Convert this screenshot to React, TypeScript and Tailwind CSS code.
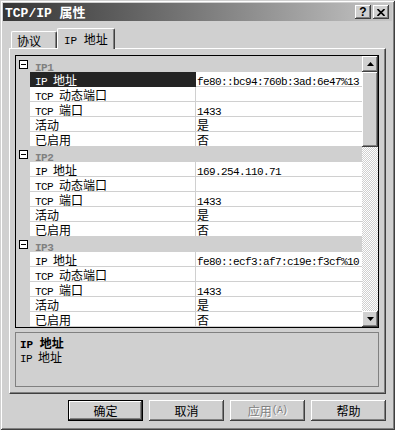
import React from "react";

const CJK_RE = /[\u2E80-\u9FFF\uF900-\uFAFF\uFF00-\uFFEF\u3000-\u303F]/;

function splitRuns(text: string) {
  const out: { s: string; c: boolean }[] = [];
  for (const ch of Array.from(text)) {
    const c = CJK_RE.test(ch);
    const last = out[out.length - 1];
    if (last && last.c === c) last.s += ch;
    else out.push({ s: ch, c });
  }
  return out;
}

function Txt({
  text,
  lat = "font-['Liberation_Mono',monospace] text-[11px] leading-[14px] tracking-[-0.6px]",
  cjk = "font-['Noto_Sans_CJK_SC',sans-serif] text-[12px] leading-[14px]",
}: {
  text: string;
  lat?: string;
  cjk?: string;
}) {
  return (
    <>
      {splitRuns(text).map((r, i) => (
        <span key={i} className={r.c ? `inline-block whitespace-pre ${cjk}` : `inline-block whitespace-pre ${lat}`}>
          {r.s}
        </span>
      ))}
    </>
  );
}

const bevel =
  "bg-[#d0d0d0] shadow-[inset_-1px_-1px_0_#404040,inset_1px_1px_0_#ffffff,inset_-2px_-2px_0_#808080]";

function MinusBox() {
  return (
    <div className="w-[9px] h-[9px] border border-black bg-white flex items-center justify-center">
      <div className="w-[5px] h-[1px] bg-black" />
    </div>
  );
}

function Category({ label, first }: { label: string; first?: boolean }) {
  return (
    <div className={`flex items-center bg-[#d0d0d0] shrink-0 ${first ? "h-[16px] pt-[1px]" : "h-[15px]"}`}>
      <div className="w-[14px] shrink-0 flex items-center justify-center">
        <MinusBox />
      </div>
      <div className="pl-[5px] font-bold text-[#808080] leading-[14px] h-[14px]">
        <Txt text={label} lat="font-['Liberation_Mono',monospace] text-[11px] leading-[14px] tracking-[-0.5px] font-bold" />
      </div>
    </div>
  );
}

function PropRow({ name, value, selected }: { name: string; value: string; selected?: boolean }) {
  return (
    <div className="flex h-[15px] leading-[14px] shrink-0">
      <div className="w-[14px] shrink-0 bg-[#d0d0d0]" />
      <div
        className={
          selected
            ? "w-[166px] shrink-0 border-r border-b border-[#242424] bg-[#242424] text-white pl-[5px] whitespace-nowrap overflow-hidden"
            : "w-[166px] shrink-0 border-r border-b border-[#d0d0d0] bg-white text-black pl-[5px] whitespace-nowrap overflow-hidden"
        }
      >
        <Txt text={name} />
      </div>
      <div className="flex-1 min-w-0 bg-white border-b border-[#d0d0d0] pl-[1px] text-black whitespace-nowrap overflow-hidden">
        <Txt text={value} />
      </div>
    </div>
  );
}

function Group({ label, ip, first, selectFirst }: { label: string; ip: string; first?: boolean; selectFirst?: boolean }) {
  return (
    <>
      <Category label={label} first={first} />
      <PropRow name="IP 地址" value={ip} selected={selectFirst} />
      <PropRow name="TCP 动态端口" value="" />
      <PropRow name="TCP 端口" value="1433" />
      <PropRow name="活动" value="是" />
      <PropRow name="已启用" value="否" />
    </>
  );
}

function Arrow({ up }: { up?: boolean }) {
  return (
    <svg width="7" height="4" viewBox="0 0 7 4" className="block">
      {up ? <path d="M3.5 0 L7 4 L0 4 Z" fill="#000" /> : <path d="M0 0 L7 0 L3.5 4 Z" fill="#000" />}
    </svg>
  );
}

function Scrollbar() {
  return (
    <div className="w-[16px] shrink-0 flex flex-col">
      <div className={`h-[16px] flex items-center justify-center ${bevel}`}>
        <Arrow up />
      </div>
      <div className={`h-[75px] ${bevel}`} />
      <div className="flex-1 bg-[image:repeating-conic-gradient(#ffffff_0%_25%,#d0d0d0_0%_50%)] bg-[length:2px_2px]" />
      <div className={`h-[16px] flex items-center justify-center ${bevel}`}>
        <Arrow />
      </div>
    </div>
  );
}

function Btn({ label, def, disabled }: { label: string; def?: boolean; disabled?: boolean }) {
  const inner = (
    <div
      className={`flex-1 flex items-center justify-center leading-[14px] ${bevel} ${
        disabled ? "text-[#808080] [text-shadow:1px_1px_0_#ffffff]" : "text-black"
      }`}
    >
      <Txt
        text={label}
        lat="font-['Liberation_Mono',monospace] text-[10px] leading-[14px] tracking-[-0.8px]"
        cjk="font-['Noto_Sans_CJK_SC',sans-serif] text-[12px] leading-[14px]"
      />
    </div>
  );
  return def ? (
    <div className="w-[75px] h-[21px] border border-black flex">{inner}</div>
  ) : (
    <div className="w-[75px] h-[21px] flex">{inner}</div>
  );
}

export default function App() {
  return (
    <div className="w-[395px] h-[430px] bg-[#d0d0d0] p-[3px] flex flex-col shadow-[inset_1px_1px_0_#d0d0d0,inset_-1px_-1px_0_#404040,inset_2px_2px_0_#ffffff,inset_-2px_-2px_0_#808080] select-none">
      {/* Title bar */}
      <div className="h-[18px] shrink-0 bg-linear-to-r from-[#363636] to-[#c6c6c6] flex items-center pl-[2px] pr-[3px]">
        <div className="text-white font-bold leading-[16px] whitespace-nowrap">
          <Txt
            text="TCP/IP 属性"
            lat="font-['Liberation_Mono',monospace] text-[13px] leading-[16px] font-bold"
            cjk="font-['Noto_Sans_CJK_SC',sans-serif] text-[13px] leading-[16px] font-bold"
          />
        </div>
        <div className="flex-1" />
        <div className={`w-[16px] h-[14px] flex items-center justify-center ${bevel}`}>
          <span className="font-['Liberation_Sans',sans-serif] font-bold text-[12px] leading-[12px] text-black">?</span>
        </div>
        <div className={`ml-[2px] w-[16px] h-[14px] flex items-center justify-center ${bevel}`}>
          <svg width="8" height="7" viewBox="0 0 8 7" className="block">
            <path d="M0.5 0 L7.5 7 M7.5 0 L0.5 7" stroke="#000" strokeWidth="1.6" />
          </svg>
        </div>
      </div>

      {/* Tabs */}
      <div className="h-[27px] shrink-0 flex items-end pl-[8px]">
        <div className="w-[46px] h-[17px] border-l border-t border-white border-r border-r-[#404040] rounded-t-[2px] shadow-[inset_-1px_0_0_#808080] pl-[5px] pt-[1px] leading-[14px] text-black">
          <Txt text="协议" cjk="font-['Noto_Sans_CJK_SC',sans-serif] text-[12px] leading-[15px]" />
        </div>
        <div className="relative z-10 -mb-px w-[58px] h-[21px] bg-[#d0d0d0] border-l border-t border-white border-r border-r-[#404040] rounded-t-[2px] shadow-[inset_-1px_0_0_#808080] pl-[6px] pt-[2px] leading-[14px] text-black">
          <Txt
            text="IP 地址"
            lat="font-['Liberation_Mono',monospace] text-[11px] leading-[15px]"
            cjk="font-['Noto_Sans_CJK_SC',sans-serif] text-[12px] leading-[15px]"
          />
        </div>
      </div>

      {/* Panel */}
      <div className="ml-[6px] mr-[6px] h-[346px] shrink-0 border-t border-l border-white border-r border-b border-r-[#404040] border-b-[#404040] shadow-[inset_-1px_-1px_0_#808080] pl-[5px] pr-[6px] pt-[6px] flex flex-col">
        {/* Property grid */}
        <div className="h-[273px] shrink-0 border border-black flex">
          <div className="flex-1 flex flex-col min-w-0">
            <Group label="IP1" ip="fe80::bc94:760b:3ad:6e47%13" first selectFirst />
            <Group label="IP2" ip="169.254.110.71" />
            <Group label="IP3" ip="fe80::ecf3:af7:c19e:f3cf%10" />
          </div>
          <Scrollbar />
        </div>
        {/* Description */}
        <div className="mt-[4px] h-[55px] shrink-0 border border-[#808080] pl-[4px] pt-[2px] leading-[14px] text-black">
          <div className="font-bold h-[14px]">
            <Txt
              text="IP 地址"
              lat="font-['Liberation_Mono',monospace] text-[11px] leading-[14px] font-bold"
              cjk="font-['Noto_Sans_CJK_SC',sans-serif] text-[12px] leading-[14px] font-bold"
            />
          </div>
          <div className="h-[14px]">
            <Txt text="IP 地址" />
          </div>
        </div>
      </div>

      {/* Buttons */}
      <div className="mt-[6px] h-[21px] shrink-0 flex justify-end gap-[6px] pr-[6px]">
        <Btn label="确定" def />
        <Btn label="取消" />
        <Btn label="应用(A)" disabled />
        <Btn label="帮助" />
      </div>
    </div>
  );
}
